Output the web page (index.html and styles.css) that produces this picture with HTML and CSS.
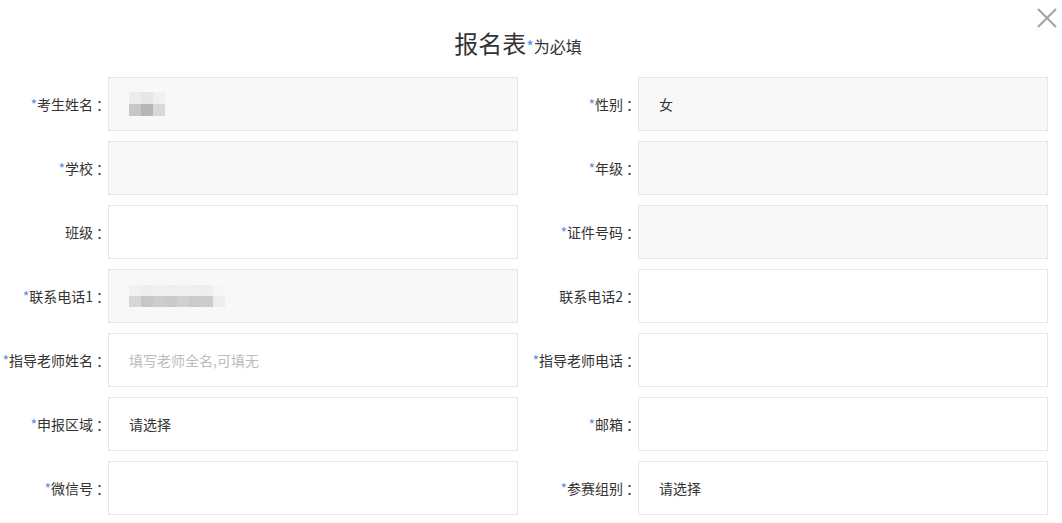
FILE: index.html
```html
<!DOCTYPE html>
<html lang="zh-CN">
<head>
    <meta charset="UTF-8">
    <title>报名表</title>
    <link rel="stylesheet" href="styles.css">
</head>
<body>

<div class="dialog">
    <span class="close">
        <svg width="22" height="22" viewBox="0 0 22 22">
            <path d="M2 2 L20 20 M20 2 L2 20" stroke="#a6a6a6" stroke-width="2.2" fill="none"/>
        </svg>
    </span>

    <h1 class="title">报名表<small><i>*</i>为必填</small></h1>

    <div class="form">
        <label class="label"><i>*</i>考生姓名<span class="colon">：</span></label>
        <div class="field readonly">
            <div class="mosaic">
                <b style="background:#ececec"></b><b style="background:#e6e6e6"></b><b style="background:#f0f0f0"></b>
                <b style="background:#c9c5c9"></b><b style="background:#b6b6b6"></b><b style="background:#d9d9d9"></b>
            </div>
        </div>
        <label class="label"><i>*</i>性别<span class="colon">：</span></label>
        <div class="field readonly">女</div>

        <label class="label"><i>*</i>学校<span class="colon">：</span></label>
        <div class="field readonly"></div>
        <label class="label"><i>*</i>年级<span class="colon">：</span></label>
        <div class="field readonly"></div>

        <label class="label">班级<span class="colon">：</span></label>
        <div class="field"></div>
        <label class="label"><i>*</i>证件号码<span class="colon">：</span></label>
        <div class="field readonly"></div>

        <label class="label"><i>*</i>联系电话1<span class="colon">：</span></label>
        <div class="field readonly">
            <div class="mosaic wide">
                <b style="background:#f1f1f1"></b><b style="background:#eeeeee"></b><b style="background:#f0f0f0"></b><b style="background:#efefef"></b><b style="background:#f0f0f0"></b><b style="background:#efefef"></b><b style="background:#eeeeee"></b><b style="background:#f6f6f6"></b>
                <b style="background:#d6d6d6"></b><b style="background:#c8c6c8"></b><b style="background:#cdcdcd"></b><b style="background:#cacaca"></b><b style="background:#d0d0d0"></b><b style="background:#cbcbcb"></b><b style="background:#cccccc"></b><b style="background:#ededed"></b>
            </div>
        </div>
        <label class="label">联系电话2<span class="colon">：</span></label>
        <div class="field"></div>

        <label class="label"><i>*</i>指导老师姓名<span class="colon">：</span></label>
        <div class="field"><span class="placeholder">填写老师全名,可填无</span></div>
        <label class="label"><i>*</i>指导老师电话<span class="colon">：</span></label>
        <div class="field"></div>

        <label class="label"><i>*</i>申报区域<span class="colon">：</span></label>
        <div class="field">请选择</div>
        <label class="label"><i>*</i>邮箱<span class="colon">：</span></label>
        <div class="field"></div>

        <label class="label"><i>*</i>微信号<span class="colon">：</span></label>
        <div class="field"></div>
        <label class="label"><i>*</i>参赛组别<span class="colon">：</span></label>
        <div class="field">请选择</div>
    </div>
</div>

</body>
</html>
```

FILE: styles.css
```css
body {
    margin: 0;
    background: #fff;
    font-family: "Microsoft YaHei", "Noto Sans CJK SC", sans-serif;
    font-size: 14px;
    color: #333;
}

.dialog {
    position: relative;
    width: 1062px;
}

.close {
    position: absolute;
    top: 7px;
    right: 4px;
    width: 22px;
    height: 22px;
}

.title {
    margin: 0;
    padding: 25px 26px 0 0;
    height: 52px;
    text-align: center;
    font-size: 24px;
    font-weight: normal;
    line-height: 36px;
    color: #333;
}

.title small {
    font-size: 16px;
}

i {
    font-style: normal;
    color: #4a8df8;
}

.form {
    display: grid;
    grid-template-columns: 108px 410px 120px 410px;
    grid-auto-rows: 54px;
    row-gap: 10px;
}

.label {
    display: flex;
    align-items: center;
    justify-content: flex-end;
    padding-right: 1px;
    white-space: nowrap;
}

.colon {
    margin-left: 3px;
    margin-right: -3px;
}

.field {
    box-sizing: border-box;
    display: flex;
    align-items: center;
    padding-left: 20px;
    border: 1px solid #e6e6e6;
    background: #fff;
}

.field.readonly {
    background: #f8f8f8;
}

.placeholder {
    color: #bdbdbd;
}

.mosaic {
    display: grid;
    grid-template-columns: repeat(3, 12px);
    grid-auto-rows: 12px;
}

.mosaic.wide {
    grid-template-columns: repeat(8, 12px);
    grid-auto-rows: 11px;
}
```
